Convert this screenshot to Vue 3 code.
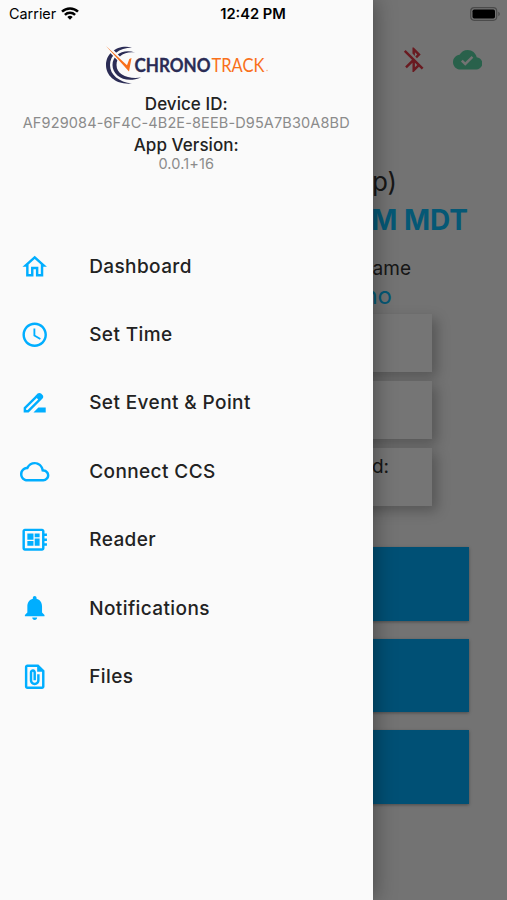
<script setup>
const menu = [
  { label: 'Dashboard', icon: 'M12 5.69l5 4.5V18h-2v-6H9v6H7v-7.81l5-4.5M12 3L2 12h3v8h6v-6h2v6h6v-8h3L12 3z' },
  { label: 'Set Time', icon: 'M11.99 2C6.47 2 2 6.48 2 12s4.47 10 9.99 10C17.52 22 22 17.52 22 12S17.52 2 11.99 2zM12 20c-4.42 0-8-3.58-8-8s3.58-8 8-8 8 3.58 8 8-3.58 8-8 8zm.5-13H11v6l5.25 3.15.75-1.23-4.5-2.67z' },
  { label: 'Set Event & Point', icon: 'M18.41 5.8L17.2 4.59c-.78-.78-2.05-.78-2.83 0l-2.68 2.68L3 15.96V20h4.04l8.74-8.74 2.63-2.63c.79-.78.79-2.05 0-2.83zM6.21 18H5v-1.21l8.66-8.66 1.21 1.21L6.21 18zM11 20l4-4h6v4H11z' },
  { label: 'Connect CCS', icon: 'M19.35 10.04C18.67 6.59 15.64 4 12 4 9.11 4 6.6 5.64 5.35 8.04 2.34 8.36 0 10.91 0 14c0 3.31 2.69 6 6 6h13c2.76 0 5-2.24 5-5 0-2.64-2.05-4.78-4.65-4.96zM19 18H6c-2.21 0-4-1.79-4-4 0-2.05 1.53-3.76 3.56-3.97l1.07-.11.5-.95C8.08 7.14 9.94 6 12 6c2.62 0 4.88 1.86 5.39 4.43l.3 1.5 1.53.11c1.56.1 2.78 1.41 2.78 2.96 0 1.65-1.35 3-3 3z' },
  { label: 'Reader', icon: 'M22 9V7h-2V5c0-1.1-.9-2-2-2H4c-1.1 0-2 .9-2 2v14c0 1.1.9 2 2 2h14c1.1 0 2-.9 2-2v-2h2v-2h-2v-2h2v-2h-2V9h2zm-4 10H4V5h14v14zM6 13h5v4H6zm6-6h4v3h-4zM6 7h5v5H6zm6 4h4v6h-4z' },
  { label: 'Notifications', icon: 'M12 22c1.1 0 2-.9 2-2h-4c0 1.1.89 2 2 2zm6-6v-5c0-3.07-1.64-5.64-4.5-6.32V4c0-.83-.67-1.5-1.5-1.5s-1.5.67-1.5 1.5v.68C7.63 5.36 6 7.92 6 11v5l-2 2v1h16v-1l-2-2z' },
  { label: 'Files', icon: 'M15 2H6c-1.1 0-2 .9-2 2v16c0 1.1.9 2 2 2h12c1.1 0 2-.9 2-2V7l-5-5zM6 20V4h8v4h4v12H6zm10-10v5c0 2.21-1.79 4-4 4s-4-1.79-4-4V8.5c0-1.47 1.26-2.64 2.76-2.49 1.3.13 2.24 1.32 2.24 2.63V15h-2V8.5c0-.28-.22-.5-.5-.5s-.5.22-.5.5V15c0 1.1.9 2 2 2s2-.9 2-2v-5h2z' },
]
</script>

<template>
  <div class="screen">
    <main class="page">
      <div class="toolbar">
        <svg class="icon bluetooth" viewBox="0 0 24 24"><path d="M13 5.83l1.88 1.88-1.6 1.6 1.41 1.41 3.02-3.02L12 2h-1v5.03l2 2v-3.2zM5.41 4L4 5.41 10.59 12 5 17.59 6.41 19 11 14.41V22h1l4.29-4.29 2.3 2.29L20 18.59 5.41 4zM13 18.17v-3.76l1.88 1.88L13 18.17z" /></svg>
        <svg class="icon cloud" viewBox="0 0 24 24"><path d="M19.35 10.04C18.67 6.59 15.64 4 12 4 9.11 4 6.6 5.64 5.35 8.04 2.34 8.36 0 10.91 0 14c0 3.31 2.69 6 6 6h13c2.76 0 5-2.24 5-5 0-2.64-2.05-4.78-4.65-4.96zM10 17l-3.5-3.5 1.41-1.41L10 14.17 15.18 9l1.41 1.41L10 17z" /></svg>
      </div>
      <div class="source">p)</div>
      <div class="clock">M MDT</div>
      <div class="name">ame</div>
      <div class="event">no</div>
      <div class="cards">
        <div class="card"></div>
        <div class="card"></div>
        <div class="card">d:</div>
      </div>
      <div class="buttons">
        <div class="button"></div>
        <div class="button"></div>
        <div class="button"></div>
      </div>
    </main>
    <div class="scrim"></div>

    <aside class="drawer">
      <header class="head">
        <svg class="logo" viewBox="0 0 166 42" width="166" height="42">
          <g fill="#2b2c55">
            <path d="M27 2.500C14-1 1 7 1 20c0 11 10 20 26 18.500C14 37 5 30 5 20 5 10 14 3 27 2.500z" />
            <path d="M30 7.500C18 3.500 7.500 10 7.500 20c0 11 13 19 28.500 12.500C23 34.500 11.500 29.500 11.500 20c0-8.500 8-14 18.500-12.500z" />
          </g>
          <path d="M3 2.500L22.500 22.500 24.500 13.500" fill="none" stroke="#fafafa" stroke-width="4.500" />
          <path d="M1 1L22 20.300 24.300 14 26.500 13 24 26.500z" fill="#f9701b" />
          <text x="29.500" y="26.500" class="chrono" textLength="76" lengthAdjust="spacingAndGlyphs">CHRONO</text>
          <text x="106.500" y="26.500" class="track" textLength="53" lengthAdjust="spacingAndGlyphs">TRACK</text>
          <circle cx="162" cy="25.500" r=".7" fill="#f9701b" opacity=".6" />
        </svg>
        <div class="title device">Device ID:</div>
        <div class="value uuid">AF929084-6F4C-4B2E-8EEB-D95A7B30A8BD</div>
        <div class="title version">App Version:</div>
        <div class="value">0.0.1+16</div>
      </header>
      <nav class="menu">
        <div v-for="item in menu" :key="item.label" class="item">
          <svg class="icon" viewBox="0 0 24 24"><path :d="item.icon" /></svg>
          <span>{{ item.label }}</span>
        </div>
      </nav>
    </aside>

    <div class="status">
      <span class="carrier">Carrier</span>
      <svg class="wifi" viewBox="0 0 18 13" width="18" height="13">
        <g fill="none" stroke="#000" stroke-width="2.500">
          <path d="M1 4.700a11.500 11.500 0 0 1 16 0" />
          <path d="M3.900 7.900a7.400 7.400 0 0 1 10.200 0" />
        </g>
        <path d="M9 12.800L6.300 10a3.900 3.900 0 0 1 5.400 0z" />
      </svg>
      <span class="time">12:42 PM</span>
      <svg class="battery" viewBox="0 0 31 14" width="31" height="14">
        <rect x=".7" y=".7" width="26" height="12.600" rx="3.500" fill="none" stroke="#4b4b4b" stroke-width="1.200" />
        <rect x="2.500" y="2.500" width="22.500" height="9" rx="1.700" />
        <path d="M28.300 4.800c2 .7 2 3.700 0 4.400z" fill="#4b4b4b" />
      </svg>
    </div>
  </div>
</template>

<style>
body {
  margin: 0;
}
</style>

<style scoped>
.screen {
  display: grid;
  grid-template: 900px / 507px;
  overflow: hidden;
  font-family: Inter, "Liberation Sans", sans-serif;
  background: #fafafa;
}
.page, .scrim, .drawer, .status {
  grid-area: 1 / 1;
  min-width: 0;
  box-sizing: border-box;
}
.scrim {
  background: rgba(0, 0, 0, .54);
  z-index: 1;
}
.icon {
  width: 29.4px;
  height: 29.4px;
  flex: none;
  fill: #00aeff;
}
.page {
  display: flex;
  flex-direction: column;
  align-items: flex-end;
  color: #333;
}
.toolbar {
  display: flex;
  gap: 24px;
  padding: 45px 25px 0 0;
}
.toolbar .bluetooth { fill: #e53946; }
.toolbar .cloud { fill: #5bd3a4; }
.source {
  margin: 91px 110px 0 0;
  font-size: 26px;
  line-height: 34px;
}
.clock {
  margin: 2px 39px 0 0;
  font-size: 28px;
  font-weight: 700;
  line-height: 38px;
  color: #0bbfff;
}
.name {
  margin: 17px 96px 0 0;
  font-size: 19px;
  line-height: 26px;
}
.event {
  margin: -1px 115px 0 0;
  font-size: 24px;
  line-height: 30px;
  color: #0bbfff;
}
.cards {
  display: flex;
  flex-direction: column;
  gap: 9px;
  width: 357px;
  margin: 3px 75px 0 0;
}
.card {
  height: 58px;
  padding: 7px 43px 0 0;
  box-sizing: border-box;
  text-align: right;
  font-size: 19px;
  line-height: 24px;
  background: #fff;
  box-shadow: 5px 5px 12px rgba(0, 0, 0, .25);
}
.buttons {
  display: flex;
  flex-direction: column;
  gap: 18px;
  width: 431px;
  margin: 41px 38px 0 0;
}
.button {
  height: 73.5px;
  background: #00aeff;
  box-shadow: 0 1px 3px rgba(0, 0, 0, .35);
}
.drawer {
  z-index: 2;
  width: 372.5px;
  background: #fafafa;
  box-shadow: 2px 0 20px rgba(0, 0, 0, .35);
}
.head {
  display: flex;
  flex-direction: column;
  align-items: center;
  height: 232px;
  padding-top: 45px;
  box-sizing: border-box;
}
.logo {
  margin: 0 0 7px 4px;
}
.chrono, .track {
  font-family: Lato, sans-serif;
  font-size: 18.4px;
}
.chrono {
  font-weight: 700;
  fill: #2b2c55;
  stroke: #2b2c55;
  stroke-width: .3px;
}
.track { fill: #f9701b; }
.title {
  font-size: 17px;
  font-weight: 500;
  line-height: 20px;
  letter-spacing: .05px;
  color: #222;
}
.value {
  margin-top: -1px;
  font-size: 14.5px;
  line-height: 19px;
  letter-spacing: .13px;
  color: #8b8b8b;
}
.version { margin-top: 3px; }
.item {
  display: flex;
  align-items: center;
  gap: 39.500px;
  height: 68.400px;
  padding-left: 20.300px;
  font-size: 19px;
  font-weight: 500;
  letter-spacing: .4px;
  color: #222;
}
.status {
  z-index: 3;
  display: grid;
  grid-template-columns: auto auto 1fr auto;
  align-items: center;
  height: 27px;
  padding: 0 6px 0 9px;
  color: #000;
}
.carrier {
  font-size: 14.4px;
}
.wifi { margin-left: 5px; }
.time {
  padding-left: 141px;
  font-size: 14.7px;
  font-weight: 600;
}
</style>
